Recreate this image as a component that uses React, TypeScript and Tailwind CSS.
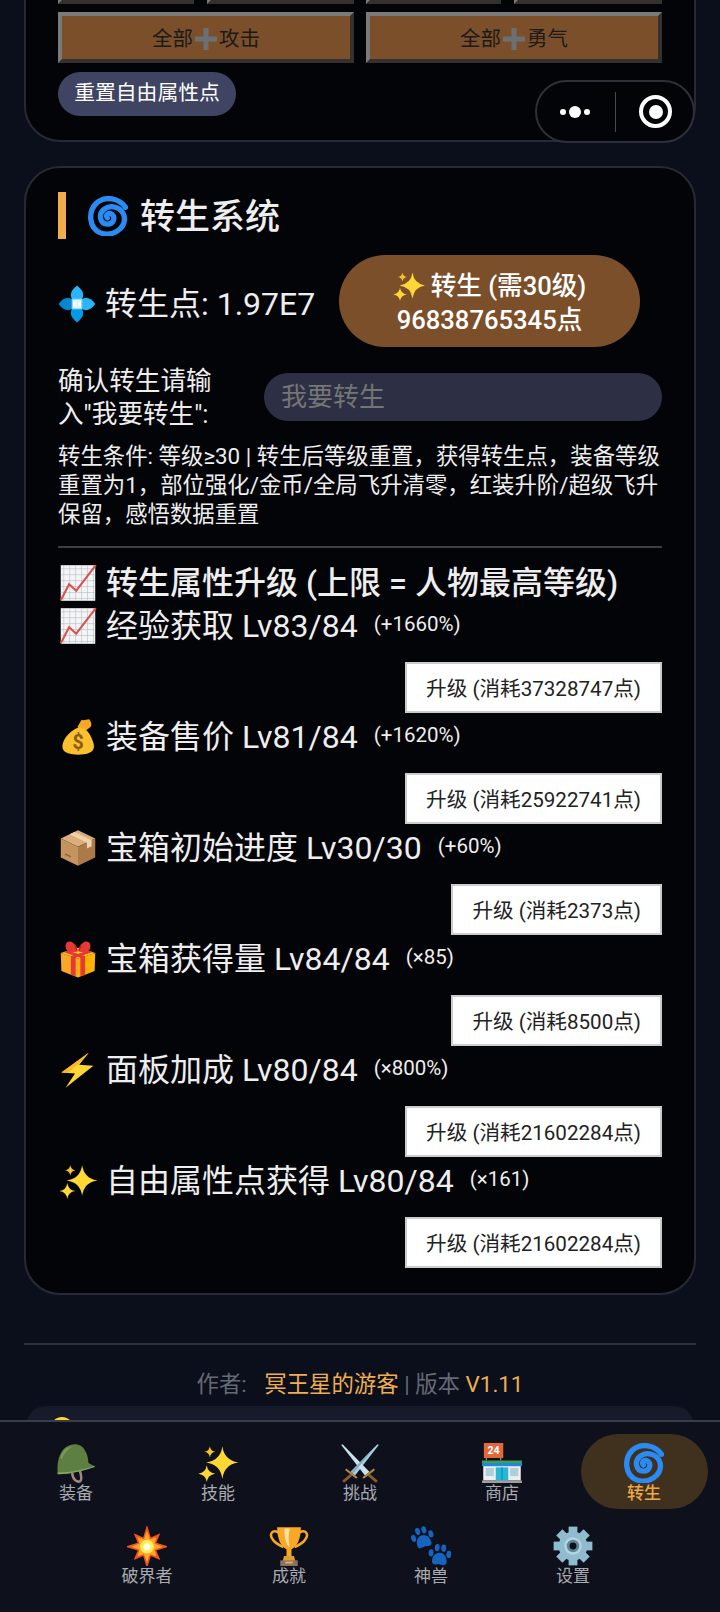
import type { ReactNode } from 'react'

type IconProps = { size?: number }

const star = (cx: number, cy: number, r: number) =>
  `M${cx} ${cy - r}Q${cx + r * 0.12} ${cy - r * 0.12} ${cx + r} ${cy}Q${cx + r * 0.12} ${cy + r * 0.12} ${cx} ${cy + r}Q${cx - r * 0.12} ${cy + r * 0.12} ${cx - r} ${cy}Q${cx - r * 0.12} ${cy - r * 0.12} ${cx} ${cy - r}Z`

const burst = (cx: number, cy: number, outer: number, inner: number, n: number) =>
  Array.from({ length: n * 2 }, (_, i) => {
    const a = (i * Math.PI) / n - Math.PI / 2
    const r = i % 2 === 0 ? (i % 4 === 0 ? outer : outer * 0.86) : inner
    return `${(cx + Math.cos(a) * r).toFixed(1)},${(cy + Math.sin(a) * r).toFixed(1)}`
  }).join(' ')

function Cyclone({ size = 40 }: IconProps) {
  return (
    <svg width={size} height={size} viewBox="0 0 128 128" fill="none">
      <path
        d="M120 36C100 6 54 -2 26 24C0 50 2 102 40 118C78 132 122 104 116 66C110 36 74 26 52 42C32 58 38 90 62 90C84 90 90 62 72 56C62 54 56 62 62 70"
        stroke="#2a8bf2"
        strokeWidth="17"
        strokeLinecap="round"
      />
    </svg>
  )
}

function Diamond({ size = 40 }: IconProps) {
  return (
    <svg width={size} height={size} viewBox="0 0 128 128">
      <path d="M64 2C92 24 92 44 64 64C36 44 36 24 64 2Z" fill="#29b6f6" />
      <path d="M64 126C92 104 92 84 64 64C36 84 36 104 64 126Z" fill="#039be5" />
      <path d="M2 64C24 36 44 36 64 64C44 92 24 92 2 64Z" fill="#0288d1" />
      <path d="M126 64C104 36 84 36 64 64C84 92 104 92 126 64Z" fill="#29b6f6" />
      <rect x="46" y="46" width="36" height="36" fill="#81d4fa" />
      <path d="M50 50L78 50L64 64ZM50 78L78 78L64 64Z" fill="#e1f5fe" />
      <path d="M50 50L50 78L64 64ZM78 50L78 78L64 64Z" fill="#ffffff" />
    </svg>
  )
}

function Sparkles({ size = 40 }: IconProps) {
  return (
    <svg width={size} height={size} viewBox="0 0 128 128">
      <path d={star(78, 62, 52)} fill="#fdd835" />
      <path d={star(28, 98, 27)} fill="#fdd835" />
      <path d={star(38, 28, 18)} fill="#f9c02d" />
    </svg>
  )
}

function Chart({ size = 40 }: IconProps) {
  const lines = [16, 36, 56, 76, 96, 116]
  return (
    <svg width={size} height={size} viewBox="0 0 128 128">
      <rect x="6" y="4" width="116" height="120" fill="#f5f5f5" />
      {lines.map((p) => (
        <g key={p} stroke="#b0bec5" strokeWidth="2">
          <line x1={p} y1="4" x2={p} y2="124" />
          <line x1="6" y1={p} x2="122" y2={p} />
        </g>
      ))}
      <path d="M6 122L34 68L58 90L124 4" fill="none" stroke="#d9534f" strokeWidth="7" />
    </svg>
  )
}

function MoneyBag({ size = 40 }: IconProps) {
  return (
    <svg width={size} height={size} viewBox="0 0 128 128">
      <path d="M62 30L76 6C84 10 92 4 102 4C108 12 112 24 106 30L88 44Z" fill="#f9a825" />
      <path d="M68 30C30 46 8 78 12 102C16 122 56 126 84 122C114 118 122 104 116 84C110 64 98 42 86 36Z" fill="#fbc02d" />
      <text x="64" y="104" textAnchor="middle" fontSize="66" fontWeight="700" fill="#8d5a1b" fontFamily="Roboto, sans-serif">
        $
      </text>
    </svg>
  )
}

function Box({ size = 40 }: IconProps) {
  return (
    <svg width={size} height={size} viewBox="0 0 128 128">
      <path d="M64 4L122 32L64 60L6 32Z" fill="#d9ae7c" />
      <path d="M6 32L64 60L64 124L6 96Z" fill="#c4935f" />
      <path d="M122 32L64 60L64 124L122 96Z" fill="#ab7a48" />
      <path d="M36 18L94 46L94 66L110 58L110 38L52 10Z" fill="#eed2ac" />
      <path d="M20 84L40 94" stroke="#8d6238" strokeWidth="5" />
    </svg>
  )
}

function Gift({ size = 40 }: IconProps) {
  return (
    <svg width={size} height={size} viewBox="0 0 128 128">
      <path d="M6 44L64 62L64 126L8 104Z" fill="#f9a825" />
      <path d="M122 44L64 62L64 126L120 104Z" fill="#ffb300" />
      <path d="M6 44L64 26L122 44L64 62Z" fill="#ffca28" />
      <path d="M30 36L88 54L88 116L72 122L72 60L14 40Z" fill="#e53935" />
      <path d="M98 36L40 54L40 116L56 122L56 60L114 40Z" fill="#e53935" />
      <path d="M64 38C40 46 22 40 22 20C22 6 36 2 46 8C56 14 62 26 64 38C66 26 72 14 82 8C92 2 106 6 106 20C106 40 88 46 64 38Z" fill="#e53935" />
      <path d="M60 36L54 16M68 36L74 16" stroke="#b71c1c" strokeWidth="4" />
    </svg>
  )
}

function Bolt({ size = 40 }: IconProps) {
  return (
    <svg width={size} height={size} viewBox="0 0 128 128">
      <path d="M100 6L8 72L54 76L22 124L116 50L68 46Z" fill="#fdd835" />
      <path d="M100 6L8 72L30 74L72 38Z" fill="#f9b825" />
    </svg>
  )
}

function Helmet({ size = 40 }: IconProps) {
  return (
    <svg width={size} height={size} viewBox="0 0 128 128">
      <path d="M52 96C52 114 66 128 78 122C84 116 80 100 76 86" fill="none" stroke="#a1887f" strokeWidth="8" />
      <path d="M6 100C0 50 18 4 62 4C88 4 102 32 104 64C112 68 120 72 126 76C100 84 52 100 6 100Z" fill="#5d7f3f" />
      <path d="M14 48C18 26 34 12 52 12C38 20 24 34 20 52Z" fill="#78995a" />
      <path d="M6 100C52 100 100 84 126 76L122 74C96 82 50 94 4 94Z" fill="#84a46a" />
    </svg>
  )
}

function Swords({ size = 40 }: IconProps) {
  return (
    <svg width={size} height={size} viewBox="0 0 128 128">
      <path d="M120 4L124 6L48 104L34 92Z" fill="#a8d0e0" />
      <path d="M8 4L4 6L80 104L94 92Z" fill="#c9e2ec" />
      <path d="M120 4L42 98L34 92Z" fill="#7fb0c6" />
      <path d="M18 84L54 112M110 84L74 112" stroke="#b28a3c" strokeWidth="7" />
      <path d="M36 102L10 124M92 102L118 124" stroke="#8d5a2b" strokeWidth="9" />
    </svg>
  )
}

function Store({ size = 40 }: IconProps) {
  return (
    <svg width={size} height={size} viewBox="0 0 128 128">
      <rect x="6" y="0" width="62" height="48" fill="#e2683a" />
      <text x="37" y="36" textAnchor="middle" fontSize="34" fontWeight="700" fill="#fff" fontFamily="Roboto, sans-serif">
        24
      </text>
      <path d="M14 48V56M60 48V56" stroke="#8d8d8d" strokeWidth="4" />
      <rect x="0" y="56" width="128" height="8" fill="#43a047" />
      <rect x="0" y="64" width="128" height="10" fill="#1e88e5" />
      <rect x="4" y="74" width="120" height="46" fill="#eceff1" />
      <rect x="12" y="80" width="26" height="26" fill="#b0ced8" />
      <rect x="90" y="80" width="26" height="26" fill="#b0ced8" />
      <rect x="44" y="78" width="40" height="42" fill="#26b6d6" />
      <path d="M64 78V120" stroke="#0d7f9b" strokeWidth="3" />
      <rect x="0" y="120" width="128" height="8" fill="#9e9e9e" />
    </svg>
  )
}

function Collision({ size = 40 }: IconProps) {
  return (
    <svg width={size} height={size} viewBox="0 0 128 128">
      <polygon points={burst(64, 66, 70, 32, 8)} fill="#f4511e" />
      <polygon points={burst(64, 66, 50, 26, 8)} fill="#ffa726" />
      <circle cx="64" cy="66" r="22" fill="#ffee58" />
      <circle cx="64" cy="66" r="11" fill="#fffde7" />
    </svg>
  )
}

function Trophy({ size = 40 }: IconProps) {
  return (
    <svg width={size} height={size} viewBox="0 0 128 128">
      <path d="M30 20C6 10 0 30 14 46C22 56 34 62 46 68M98 20C122 10 128 30 114 46C106 56 94 62 82 68" fill="none" stroke="#f9a825" strokeWidth="8" />
      <path d="M26 4H102C102 40 90 68 72 74L72 96H56L56 74C38 68 26 40 26 4Z" fill="#f9a825" />
      <path d="M50 8H66C62 30 62 50 66 68C54 58 48 34 50 8Z" fill="#ffe0a3" />
      <path d="M48 96H80L84 112H44Z" fill="#e0a030" />
      <rect x="36" y="110" width="56" height="18" fill="#8d6e63" />
      <rect x="52" y="114" width="24" height="6" fill="#e0b060" />
    </svg>
  )
}

function Paw({ x, y, r }: { x: number; y: number; r: number }) {
  return (
    <g transform={`translate(${x} ${y}) rotate(${r}) scale(1.3)`}>
      <path d="M-18 14C-18 -2 -8 -8 0 -8C8 -8 18 -2 18 14C18 24 8 22 0 20C-8 22 -18 24 -18 14Z" fill="#1565c0" />
      <ellipse cx="-22" cy="-6" rx="6" ry="9" fill="#1565c0" />
      <ellipse cx="-8" cy="-20" rx="6" ry="9" fill="#1565c0" />
      <ellipse cx="8" cy="-20" rx="6" ry="9" fill="#1565c0" />
      <ellipse cx="22" cy="-6" rx="6" ry="9" fill="#1565c0" />
    </g>
  )
}

function Paws({ size = 40 }: IconProps) {
  return (
    <svg width={size} height={size} viewBox="0 0 128 128">
      <Paw x={38} y={40} r={-15} />
      <Paw x={92} y={96} r={5} />
    </svg>
  )
}

function Gear({ size = 40 }: IconProps) {
  return (
    <svg width={size} height={size} viewBox="0 0 128 128">
      {[0, 45, 90, 135, 180, 225, 270, 315].map((a) => (
        <rect key={a} x="50" y="2" width="28" height="30" fill="#90bcd0" transform={`rotate(${a} 64 64)`} />
      ))}
      <circle cx="64" cy="64" r="46" fill="#90bcd0" />
      <circle cx="64" cy="64" r="28" fill="#b5d3e0" />
      <circle cx="64" cy="64" r="20" fill="#5f8596" />
      <circle cx="64" cy="64" r="11" fill="#0e111c" />
    </svg>
  )
}

function PlusMark() {
  return (
    <svg width="24" height="24" viewBox="0 0 24 24" className="mx-px inline-block align-[-5px]">
      <path d="M9.5 1h5v8.5H23v5h-8.5V23h-5v-8.5H1v-5h8.5z" fill="#6b7075" />
    </svg>
  )
}

function OutsetButton({ children, className = 'flex-1' }: { children?: ReactNode; className?: string }) {
  return (
    <button
      className={`h-[51px] min-w-0 border-[4px] border-t-[#7a7a7a] border-r-[#33302e] border-b-[#33302e] border-l-[#7a7a7a] bg-[#7c4f2b] pt-[3px] text-[20.5px] text-[#1a1a1a] ${className}`}
    >
      {children}
    </button>
  )
}

const upgrades = [
  { icon: <Chart size={38} />, name: '经验获取 Lv83/84', bonus: '(+1660%)', cost: '升级 (消耗37328747点)' },
  { icon: <MoneyBag size={38} />, name: '装备售价 Lv81/84', bonus: '(+1620%)', cost: '升级 (消耗25922741点)' },
  { icon: <Box size={38} />, name: '宝箱初始进度 Lv30/30', bonus: '(+60%)', cost: '升级 (消耗2373点)' },
  { icon: <Gift size={38} />, name: '宝箱获得量 Lv84/84', bonus: '(×85)', cost: '升级 (消耗8500点)' },
  { icon: <Bolt size={38} />, name: '面板加成 Lv80/84', bonus: '(×800%)', cost: '升级 (消耗21602284点)' },
  { icon: <Sparkles size={38} />, name: '自由属性点获得 Lv80/84', bonus: '(×161)', cost: '升级 (消耗21602284点)' },
]

const navItems = [
  { icon: <Helmet />, label: '装备' },
  { icon: <Sparkles />, label: '技能' },
  { icon: <Swords />, label: '挑战' },
  { icon: <Store />, label: '商店' },
  { icon: <Cyclone />, label: '转生', active: true },
  { icon: <Collision />, label: '破界者' },
  { icon: <Trophy />, label: '成就' },
  { icon: <Paws />, label: '神兽' },
  { icon: <Gear />, label: '设置' },
]

export default function App() {
  return (
    <div className="relative h-[1612px] w-[720px] overflow-hidden bg-[#0b0f1c] font-[Roboto,'Noto_Sans_CJK_SC',sans-serif] text-[#eeeeee]">
      {/* 上一张卡片 */}
      <section className="mx-6 -mt-[80px] rounded-[36px] border-2 border-[#272a33] bg-[#030408] px-8 pt-[31px] pb-[24px]">
        <div className="flex justify-between">
          <OutsetButton className="w-[136px]" />
          <OutsetButton className="w-[147px]" />
          <OutsetButton className="w-[135px]" />
          <OutsetButton className="w-[148px]" />
        </div>
        <div className="mt-2 flex gap-3">
          <OutsetButton className="flex-1">
            全部
            <PlusMark />
            攻击
          </OutsetButton>
          <OutsetButton className="flex-1">
            全部
            <PlusMark />
            勇气
          </OutsetButton>
        </div>
        <button className="mt-[9px] h-[44px] w-[178px] rounded-full bg-[#3f4463] text-[20.8px] text-white">
          重置自由属性点
        </button>
      </section>

      {/* 转生系统 */}
      <section className="mx-6 mt-6 rounded-[36px] border-2 border-[#272a33] bg-[#030408] px-8 pt-6 pb-[23px]">
        <div className="flex h-[47px] items-center gap-3 border-l-[8px] border-[#f0ad4e] pl-[22px] text-[35px] font-medium">
          <Cyclone />
          <span className="pt-[6px]">转生系统</span>
        </div>

        <div className="mt-4 flex items-center">
          <div className="mt-[6px] flex w-[281px] items-center gap-[9px] text-[32px]">
            <Diamond size={38} />
            <span>转生点: 1.97E7</span>
          </div>
          <button className="flex h-[92px] w-[301px] flex-col items-center justify-center rounded-full bg-[#7c4f2b] pt-[4px] text-[25.6px] leading-[34px] font-medium text-white">
            <span className="flex items-center gap-[6px]">
              <Sparkles size={32} />
              转生 (需30级)
            </span>
            <span>96838765345点</span>
          </button>
        </div>

        <div className="mt-[18px] flex items-center">
          <label className="w-[175px] shrink-0 text-[25.6px] leading-[33px]">确认转生请输入"我要转生":</label>
          <input
            placeholder="我要转生"
            className="mb-[2px] ml-[31px] h-[48px] min-w-0 flex-1 rounded-full bg-[#2d3044] px-[17px] text-[26px] outline-none placeholder:text-[#757575]"
          />
        </div>

        <p className="mt-[11px] text-[22.4px] leading-[29px]">
          转生条件: 等级≥30 | 转生后等级重置，获得转生点，装备等级重置为1，部位强化/金币/全局飞升清零，红装升阶/超级飞升保留，感悟数据重置
        </p>

        <div className="mt-[17px] h-[2px] bg-[#3d3f46]" />

        <h3 className="mt-[13px] flex h-[43px] items-center gap-[9px] text-[32px] font-medium">
          <span className="ml-[1px]">
            <Chart size={38} />
          </span>
          <span>转生属性升级 (上限 = 人物最高等级)</span>
        </h3>

        {upgrades.map((u) => (
          <div key={u.name} className="mb-[2px] flex flex-col">
            <div className="flex h-[43px] items-center text-[32px]">
              <span className="ml-[1px] flex w-[47px] shrink-0">{u.icon}</span>
              <span>{u.name}</span>
              <span className="mb-[3px] ml-[16px] text-[20.5px]">{u.bonus}</span>
            </div>
            <button className="mt-[15px] h-[51px] self-end border-2 border-[#cccccc] bg-white px-[19px] pt-[3px] text-[20.6px] text-[#222222]">
              {u.cost}
            </button>
          </div>
        ))}
      </section>

      {/* 页脚 */}
      <footer className="mx-6 mt-[48px] border-t-2 border-[#2f3340] pt-[24px]">
        <p className="text-center text-[22.4px] leading-[30px] text-[#666a75]">
          作者: <span className="ml-[12px] text-[#f0ad4e]">冥王星的游客</span> | 版本{' '}
          <span className="text-[#f0ad4e]">V1.11</span>
        </p>
        <div className="mx-[2px] mt-[7px] flex h-[80px] items-start gap-3 rounded-[20px] bg-[#161a2b] px-6 pt-[11px] text-[22px] leading-[30px] whitespace-nowrap text-[#8b8e99]">
          <span className="h-6 w-6 shrink-0 rounded-full bg-[#fdd835]" />
          <span>游戏存档保存在本地，清除缓存前请及时导出备份数据</span>
        </div>
      </footer>

      {/* 胶囊按钮 */}
      <div className="absolute top-[80px] left-[535px] flex h-[63px] w-[160px] items-center rounded-full border-2 border-[#2d3038] bg-[#030408]">
        <div className="flex w-[78px] items-center justify-center gap-[3px] pr-[2px]">
          <span className="h-[6px] w-[6px] rounded-full bg-white" />
          <span className="h-[12px] w-[12px] rounded-full bg-white" />
          <span className="h-[6px] w-[6px] rounded-full bg-white" />
        </div>
        <div className="h-[40px] w-px bg-[#4a4a4a]" />
        <div className="ml-[23px] flex h-[33px] w-[33px] items-center justify-center rounded-full border-[4px] border-white">
          <span className="h-[14px] w-[14px] rounded-full bg-white" />
        </div>
      </div>

      {/* 底部导航 */}
      <nav className="absolute top-[1420px] right-0 bottom-0 left-0 border-t-2 border-[#3a3d47] bg-[#0e111c] pt-3">
        <div className="flex flex-wrap justify-center gap-x-[15px] gap-y-2">
          {navItems.map((item) => (
            <div
              key={item.label}
              className={`flex h-[75px] w-[127px] flex-col items-center rounded-[38px] pt-[9px] ${
                item.active ? 'bg-[#40311f] font-medium text-[#eaa945]' : 'text-[#a9abb0]'
              }`}
            >
              {item.icon}
              <span className="text-[17px] leading-[20px]">{item.label}</span>
            </div>
          ))}
        </div>
      </nav>
    </div>
  )
}
